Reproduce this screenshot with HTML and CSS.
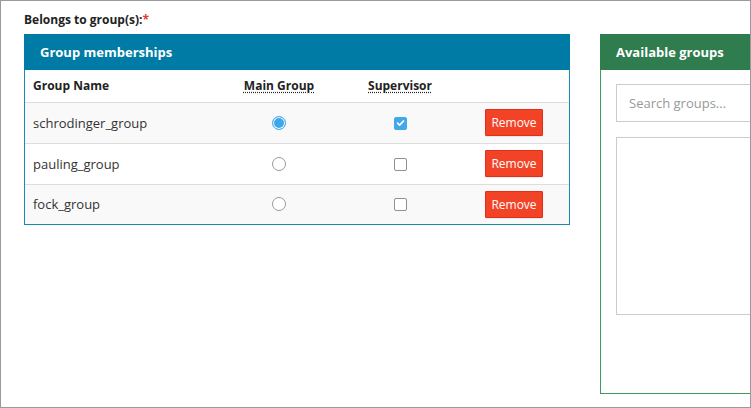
FILE: index.html
```html
<!DOCTYPE html>
<html>
<head>
<meta charset="utf-8">
<link rel="stylesheet" href="styles.css">
</head>
<body>
<div class="frame">
  <div class="label">Belongs to group(s):<span class="req">*</span></div>
  <div class="panels">
    <div class="panel panel-blue">
      <div class="panel-head">Group memberships</div>
      <table class="tbl">
        <thead>
          <tr>
            <th class="c-name">Group Name</th>
            <th class="c-mid"><abbr>Main Group</abbr></th>
            <th class="c-mid2"><abbr>Supervisor</abbr></th>
            <th class="c-act"></th>
          </tr>
        </thead>
        <tbody>
          <tr class="odd">
            <td class="c-name">schrodinger_group</td>
            <td class="c-mid"><span class="radio on"></span></td>
            <td class="c-mid2"><span class="check on"><svg viewBox="0 0 12 12" width="12" height="12"><path d="M2.8 6.2 L5 8.3 L9.3 3.8" fill="none" stroke="#fff" stroke-width="1.8" stroke-linecap="round" stroke-linejoin="round"/></svg></span></td>
            <td class="c-act"><button class="btn-remove">Remove</button></td>
          </tr>
          <tr>
            <td class="c-name">pauling_group</td>
            <td class="c-mid"><span class="radio"></span></td>
            <td class="c-mid2"><span class="check"></span></td>
            <td class="c-act"><button class="btn-remove">Remove</button></td>
          </tr>
          <tr class="odd">
            <td class="c-name">fock_group</td>
            <td class="c-mid"><span class="radio"></span></td>
            <td class="c-mid2"><span class="check"></span></td>
            <td class="c-act"><button class="btn-remove">Remove</button></td>
          </tr>
        </tbody>
      </table>
    </div>
    <div class="panel panel-green">
      <div class="panel-head green-head">Available groups</div>
      <div class="green-body">
        <div class="search">Search groups...</div>
        <div class="listbox"></div>
      </div>
    </div>
  </div>
</div>
</body>
</html>
```
FILE: styles.css
```css
html, body {
  margin: 0;
  padding: 0;
  background: #fff;
}
body {
  font-family: "Open Sans", "Liberation Sans", sans-serif;
  color: #333;
}
.frame {
  box-sizing: border-box;
  width: 751px;
  height: 408px;
  border: 1px solid #9a9a9a;
  overflow: hidden;
  padding: 11px 0 0 23px;
}
.label {
  font-size: 12px;
  font-weight: 700;
  color: #222;
  line-height: 16px;
  height: 22px;
}
.req {
  color: #e03c31;
}
.panels {
  display: flex;
  gap: 30px;
  align-items: flex-start;
}
.panel {
  flex: 0 0 546px;
  box-sizing: border-box;
  width: 546px;
}
.panel-blue {
  border: 1px solid #1a8ab5;
}
.panel-head {
  background: #007ba5;
  color: #fff;
  font-weight: 700;
  font-size: 13px;
  height: 35px;
  line-height: 35px;
  padding-left: 16px;
}
.panel-blue .panel-head {
  margin: -1px -1px 0 -1px;
  height: 36px;
  line-height: 36px;
}
.tbl {
  width: 100%;
  border-collapse: collapse;
  font-size: 13px;
}
.tbl th {
  text-align: left;
  font-weight: 700;
  font-size: 12px;
  color: #222;
  height: 32px;
  padding: 0 8px;
  box-sizing: border-box;
  border-bottom: 1px solid #ddd;
}
.tbl td {
  height: 40px;
  padding: 0 8px;
  border-bottom: 1px solid #ddd;
  color: #333;
}
.tbl tbody tr:last-child td {
  border-bottom: none;
  height: 39px;
}
.tbl tr.odd td {
  background: #f9f9f9;
}
.c-name { width: 178px; }
.c-mid { width: 104px; text-align: center !important; }
.c-mid2 { width: 106px; text-align: center !important; }
.c-act { text-align: center; }
abbr {
  text-decoration: underline dotted;
  text-underline-offset: 2px;
}
.radio {
  display: inline-block;
  width: 12px;
  height: 12px;
  border: 1px solid #9a9a9a;
  border-radius: 50%;
  vertical-align: middle;
  margin-bottom: 2px;
  background: #fff;
}
.radio.on {
  border-color: #52b0ea;
  background: #3ca7ea;
  box-shadow: inset 0 0 0 1px #fff;
}
.check {
  display: inline-flex;
  align-items: center;
  justify-content: center;
  box-sizing: border-box;
  width: 13px;
  height: 13px;
  border: 1px solid #8f8f9a;
  border-radius: 2px;
  vertical-align: middle;
  margin-bottom: 2px;
  background: #fff;
}
.check.on {
  background: #42a8ea;
  border-color: #42a8ea;
}
.check svg { display: block; }
.btn-remove {
  font-family: "Open Sans", "Liberation Sans", sans-serif;
  font-size: 12px;
  color: #fff;
  background: #f34326;
  border: 1px solid #e0301c;
  border-radius: 1px;
  width: 58px;
  height: 27px;
  padding: 0;
  margin-left: -2px;
  box-shadow: 0 1px 1px rgba(0,0,0,0.08);
}
.panel-green {
  border: 1px solid #3f9a60;
  height: 360px;
}
.green-head {
  background: #2f7d4f;
  margin: -1px -1px 0 -1px;
  height: 36px;
  line-height: 36px;
}
.green-body {
  padding: 14px 0 0 15px;
}
.search {
  box-sizing: border-box;
  height: 38px;
  border: 1px solid #ccc;
  border-right: none;
  font-size: 13px;
  color: #999;
  line-height: 36px;
  padding-left: 12px;
}
.listbox {
  box-sizing: border-box;
  margin-top: 15px;
  height: 178px;
  border: 1px solid #ccc;
  border-right: none;
}
```
